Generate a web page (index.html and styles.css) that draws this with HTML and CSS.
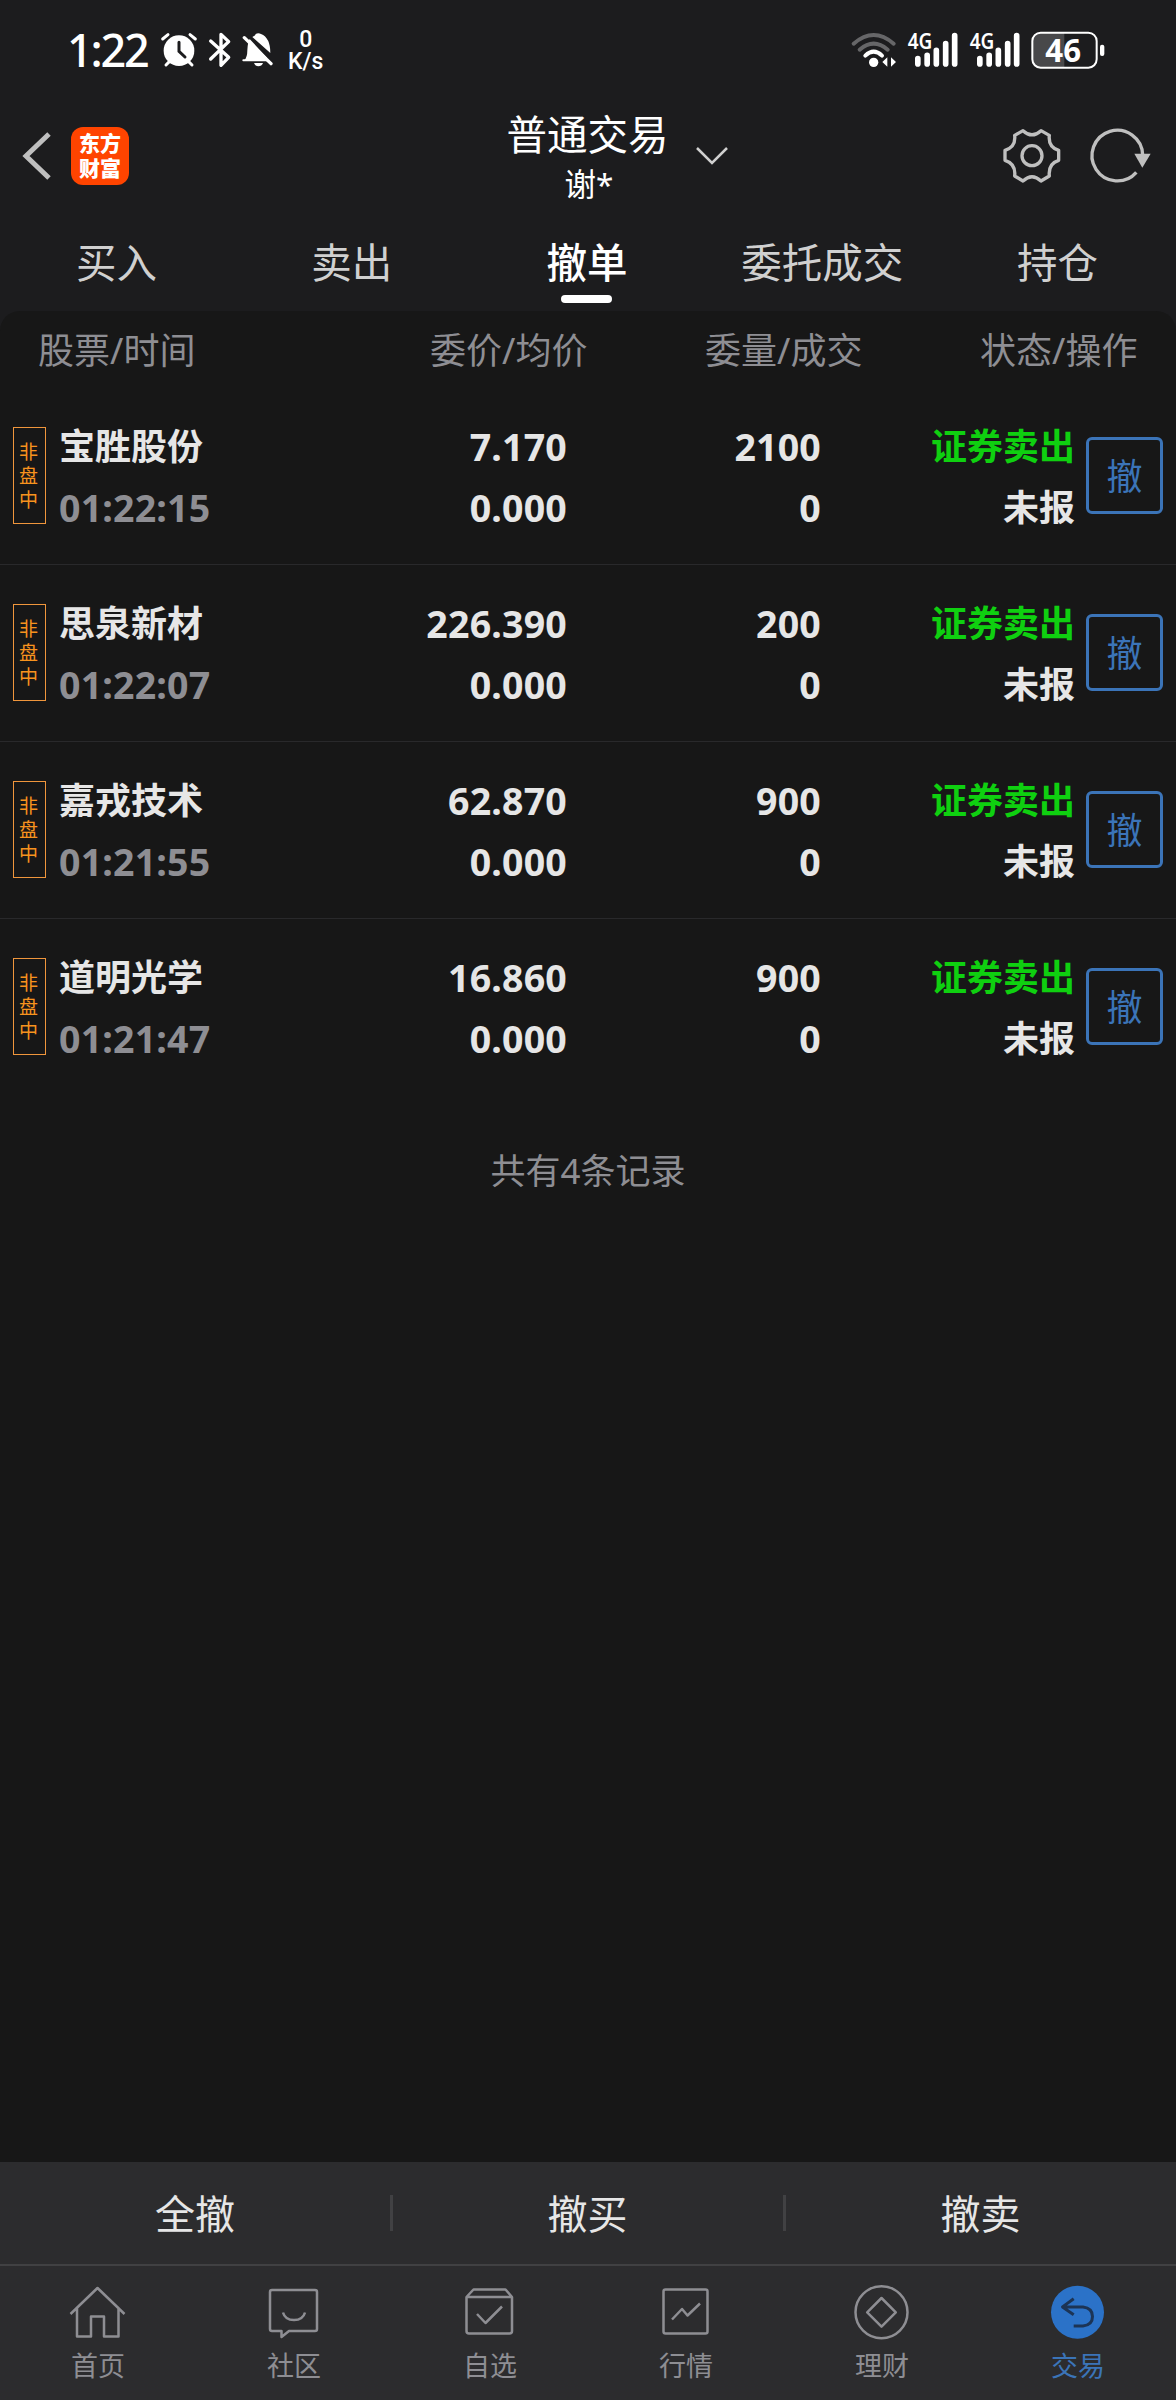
FILE: index.html
```html
<!DOCTYPE html>
<html lang="zh">
<head>
    <meta charset="UTF-8">
    <meta name="viewport" content="width=device-width, initial-scale=1.0">
    <title>普通交易 - 撤单</title>
    <link rel="stylesheet" href="styles.css">
</head>
<body>
    <div class="status-bar">
        <div class="status-left">
            <span class="clock">1:22</span>
            <svg class="icon-alarm" width="38" height="36" viewBox="480 95 114 108" fill="none" stroke="#fff" stroke-width="9" stroke-linecap="round">
                <circle cx="537" cy="151" r="46" fill="#fff" stroke="none"/>
                <path d="M488 116L504 103M570 103L586 116M498 194L508 184M576 194L566 184"/>
                <path d="M537 126V153L555 170" stroke="#1c1c1e"/>
            </svg>
            <svg class="icon-bt" width="24" height="36" viewBox="624 95 72 108" fill="none" stroke="#fff" stroke-width="10" stroke-linecap="round" stroke-linejoin="round">
                <path d="M632 122L686 171L663 195V102L686 124L632 176"/>
            </svg>
            <svg class="icon-mute" width="32" height="36" viewBox="727 95 96 108">
                <path d="M734 180Q743 171 743 150Q744 125 750 116L802 172V180Z" fill="#fff"/>
                <path d="M758 110Q768 105 768 101Q776 96 784 101Q812 112 812 158Z" fill="#fff"/>
                <path d="M731 180H803" stroke="#fff" stroke-width="6" stroke-linecap="round"/>
                <path d="M763 188H790Q786 198 776 198Q767 198 763 188Z" fill="#fff"/>
                <path d="M734 112L814 190" stroke="#fff" stroke-width="10" stroke-linecap="round"/>
            </svg>
            <div class="speed"><span>0</span><span>K/s</span></div>
        </div>
        <div class="status-right">
            <svg class="icon-wifi" width="46" height="36" viewBox="154 95 138 108" fill="none" stroke-width="12" stroke-linecap="round">
                <path d="M162 130Q222 78 282 130" stroke="#666668"/>
                <path d="M180 148Q222 112 264 148" stroke="#666668"/>
                <path d="M197 166Q222 142 247 166" stroke="#fff"/>
                <circle cx="222" cy="186" r="14" fill="#fff"/>
                <path d="M248 185L263 171V199ZM289 185L274 171V199Z" fill="#fff"/>
            </svg>
            <svg class="icon-signal" width="52" height="36" viewBox="322 95 156 108">
                <text x="324" y="147" font-size="66" textLength="74" lengthAdjust="spacingAndGlyphs" class="svg-text">4G</text>
                <path d="M354.500 175V191M382.500 165V191M410 150V191M438 130V191M465 106V191" stroke="#fff" stroke-width="17" stroke-linecap="round"/>
            </svg>
            <svg class="icon-signal" width="52" height="36" viewBox="322 95 156 108">
                <text x="324" y="147" font-size="66" textLength="74" lengthAdjust="spacingAndGlyphs" class="svg-text">4G</text>
                <path d="M354.500 175V191M382.500 165V191M410 150V191M438 130V191M465 106V191" stroke="#fff" stroke-width="17" stroke-linecap="round"/>
            </svg>
            <svg class="icon-battery" width="74" height="38" viewBox="695 91 222 114">
                <path d="M795 97H722Q699 97 699 120V178Q699 201 722 201H795Z" fill="#48484a"/>
                <rect x="699" y="96" width="193" height="105" rx="25" fill="none" stroke="#fff" stroke-width="6"/>
                <rect x="902" y="132" width="13" height="34" rx="6" fill="#fff"/>
                <text x="738" y="183" font-size="96" textLength="107" lengthAdjust="spacingAndGlyphs" class="svg-text battery-text">46</text>
            </svg>
        </div>
    </div>

    <div class="header">
        <div class="header-left">
            <svg width="28" height="48" viewBox="0 0 28 48" fill="none" stroke="#bfbfbf" stroke-width="5">
                <path d="M26 2L3 24L26 46"/>
            </svg>
            <div class="logo"><span>东方</span><span>财富</span></div>
        </div>
        <div class="header-title">
            <div class="title-text">
                <h1>普通交易</h1>
                <p>谢*</p>
            </div>
            <svg class="chevron" width="32" height="20" viewBox="0 0 32 20" fill="none" stroke="#d0d0d0" stroke-width="2.500">
                <path d="M1 2L16 17L31 2"/>
            </svg>
        </div>
        <div class="header-right">
            <svg width="58" height="56" viewBox="608 383 174 168" fill="none" stroke="#bfbfbf" stroke-width="10" stroke-linejoin="round">
                <path d="M668 391Q695 416 722 391L747 405Q743 440 775 450V480Q743 490 747 527L722 542Q695 517 668 542L643 527Q647 490 614 480V450Q647 440 643 405Z"/>
                <circle cx="695" cy="466" r="30"/>
            </svg>
            <svg width="61" height="56" viewBox="868 385 183 168" fill="none" stroke="#bfbfbf" stroke-width="10">
                <path d="M1026 466A76 76 0 1 0 1007 518"/>
                <path d="M1001 462H1050L1025 504Z" fill="#bfbfbf" stroke="none"/>
            </svg>
        </div>
    </div>

    <div class="tabs">
        <div class="tab">买入</div>
        <div class="tab">卖出</div>
        <div class="tab active">撤单</div>
        <div class="tab">委托成交</div>
        <div class="tab">持仓</div>
    </div>

    <div class="order-list">
        <div class="list-head">
            <span>股票/时间</span>
            <span>委价/均价</span>
            <span>委量/成交</span>
            <span>状态/操作</span>
        </div>

        <div class="order">
            <div class="tag">非盘中</div>
            <div class="col stock"><span>宝胜股份</span><span class="time">01:22:15</span></div>
            <div class="col price"><span>7.170</span><span>0.000</span></div>
            <div class="col amount"><span>2100</span><span>0</span></div>
            <div class="col state"><span class="sell">证券卖出</span><span>未报</span></div>
            <button type="button" class="cancel-button">撤</button>
        </div>
        <div class="order">
            <div class="tag">非盘中</div>
            <div class="col stock"><span>思泉新材</span><span class="time">01:22:07</span></div>
            <div class="col price"><span>226.390</span><span>0.000</span></div>
            <div class="col amount"><span>200</span><span>0</span></div>
            <div class="col state"><span class="sell">证券卖出</span><span>未报</span></div>
            <button type="button" class="cancel-button">撤</button>
        </div>
        <div class="order">
            <div class="tag">非盘中</div>
            <div class="col stock"><span>嘉戎技术</span><span class="time">01:21:55</span></div>
            <div class="col price"><span>62.870</span><span>0.000</span></div>
            <div class="col amount"><span>900</span><span>0</span></div>
            <div class="col state"><span class="sell">证券卖出</span><span>未报</span></div>
            <button type="button" class="cancel-button">撤</button>
        </div>
        <div class="order">
            <div class="tag">非盘中</div>
            <div class="col stock"><span>道明光学</span><span class="time">01:21:47</span></div>
            <div class="col price"><span>16.860</span><span>0.000</span></div>
            <div class="col amount"><span>900</span><span>0</span></div>
            <div class="col state"><span class="sell">证券卖出</span><span>未报</span></div>
            <button type="button" class="cancel-button">撤</button>
        </div>

        <p class="total">共有4条记录</p>
    </div>

    <div class="actions">
        <div class="action">全撤</div>
        <div class="action">撤买</div>
        <div class="action">撤卖</div>
    </div>

    <div class="bottom-nav">
        <div class="nav-item">
            <svg width="60" height="64" viewBox="0 0 60 64">
                <path d="M2.500 34L29.500 8L56.500 34M9 28V56.500H23V36.500H36V56.500H50.500V28"/>
            </svg>
            <span>首页</span>
        </div>
        <div class="nav-item">
            <svg width="60" height="64" viewBox="0 0 60 64">
                <path d="M8 10H51Q53 10 53 12V49Q53 51 51 51H25L17.500 57V51H8Q6 51 6 49V12Q6 10 8 10ZM19 32.500Q21 40 30 40Q39 40 41 32.500"/>
            </svg>
            <span>社区</span>
        </div>
        <div class="nav-item">
            <svg width="60" height="64" viewBox="0 0 60 64">
                <path d="M6.500 17L13.500 9.500H45.500L52 17V51Q52 53.500 49.500 53.500H9Q6.500 53.500 6.500 51ZM6.500 17H52M17 34L25.500 43L42 26.500"/>
            </svg>
            <span>自选</span>
        </div>
        <div class="nav-item">
            <svg width="60" height="64" viewBox="0 0 60 64">
                <rect x="7.500" y="9.500" width="44" height="44" rx="2"/>
                <path d="M16 39.500L26 29L31.500 35.500L44 23.500"/>
            </svg>
            <span>行情</span>
        </div>
        <div class="nav-item">
            <svg width="60" height="64" viewBox="0 0 60 64">
                <circle cx="29.500" cy="32.300" r="26"/>
                <path d="M29.500 18L43.800 32.300L29.500 46.600L15.200 32.300Z"/>
            </svg>
            <span>理财</span>
        </div>
        <div class="nav-item current">
            <svg width="60" height="64" viewBox="0 0 60 64">
                <circle cx="29.500" cy="32.300" r="26.500" class="nav-disc"/>
                <path d="M25.700 18.700L14.500 26.900L25.700 34.700M14.500 26.900H35Q44.500 28 44.500 36.500Q44.500 45 35 46H25.700" class="nav-arrow"/>
            </svg>
            <span>交易</span>
        </div>
    </div>
</body>
</html>
```
FILE: styles.css
```css
* {
    box-sizing: border-box;
}
body {
    font-family: "Noto Sans", "Noto Sans CJK SC", sans-serif;
    background-color: #1c1c1e;
    color: #e6e6e6;
    display: flex;
    flex-direction: column;
    height: 2400px;
    margin: 0;
}
svg {
    display: block;
    flex-shrink: 0;
    overflow: visible;
}
.svg-text {
    fill: #fff;
    font-weight: 600;
}
.battery-text {
    font-weight: 700;
}

/* 状态栏 */
.status-bar {
    display: flex;
    justify-content: space-between;
    height: 100px;
    padding: 0 71px 0 67px;
    color: #fff;
}
.status-left,
.status-right {
    display: flex;
    align-items: center;
}
.clock {
    width: 93px;
    font-family: "Noto Sans", sans-serif;
    font-size: 45px;
    font-weight: 500;
    line-height: 100px;
    letter-spacing: -2.2px;
}
.icon-bt {
    margin-left: 10px;
}
.icon-mute {
    margin-left: 10px;
}
.speed {
    display: flex;
    flex-direction: column;
    align-items: center;
    margin-left: 14px;
    padding-top: 1px;
    font-family: Roboto, sans-serif;
    font-size: 23px;
    font-weight: 500;
    line-height: 22px;
}
.icon-signal,
.icon-battery {
    margin-left: 10px;
}

/* 标题栏 */
.header {
    display: grid;
    grid-template-columns: 1fr auto 1fr;
    align-items: center;
    height: 112px;
    padding: 0 25px 0 23px;
}
.header-left {
    display: flex;
    align-items: center;
    gap: 20px;
}
.logo {
    display: flex;
    flex-direction: column;
    align-items: center;
    justify-content: center;
    width: 58px;
    height: 58px;
    border-radius: 12px;
    background-color: #ff4400;
    color: #fff;
    font-size: 21px;
    font-weight: 900;
    line-height: 25px;
}
.header-title {
    display: flex;
    align-items: center;
    gap: 27px;
    padding-left: 60px;
    color: #fff;
}
.title-text {
    padding-top: 3px;
    text-align: center;
}
.title-text h1 {
    margin: 0;
    font-size: 40.5px;
    font-weight: 400;
    line-height: 53px;
}
.title-text p {
    margin: 0;
    padding-left: 3px;
    font-size: 31.5px;
    line-height: 46px;
}
.header-right {
    display: flex;
    justify-content: flex-end;
    gap: 29px;
}

.tabs {
    display: grid;
    grid-template-columns: repeat(5, 1fr);
    height: 99px;
    font-size: 40.5px;
    line-height: 58px;
    text-align: center;
    color: #d0d0d0;
}
.tab {
    padding: 22px 2px 0 0;
}
.tab.active {
    color: #fff;
    font-weight: 500;
}
.tab.active::after {
    content: "";
    display: block;
    width: 51px;
    height: 8px;
    margin: 3px auto 0;
    border-radius: 4px;
    background-color: #fff;
}

/* 委托列表 */
.order-list {
    flex: 1;
    border-radius: 20px 20px 0 0;
    background-color: #171717;
}
.list-head {
    display: flex;
    height: 76px;
    padding: 0 39px 0 38px;
    font-size: 36px;
    line-height: 80px;
    color: #8e8e93;
}
.list-head span {
    width: 157px;
    white-space: nowrap;
}
.list-head span:nth-child(2) {
    margin-left: 235px;
}
.list-head span:nth-child(3) {
    margin-left: 118px;
}
.list-head span:nth-child(4) {
    margin-left: 118px;
}
.order {
    display: grid;
    grid-template-columns: 33px 220px 301px 254px 254px 88px;
    height: 178px;
    margin-bottom: -1px;
    padding-left: 13px;
    border-bottom: 1px solid #29292b;
}
.order:nth-last-child(2) {
    border-bottom: 0;
}
.tag {
    display: flex;
    align-items: center;
    justify-content: center;
    height: 97px;
    margin-top: 40px;
    border: 1px solid #f0963c;
    padding: 0 7px 0 5px;
    font-size: 19px;
    line-height: 24px;
    color: #f7931e;
}
.col {
    display: flex;
    flex-direction: column;
    padding-top: 29px;
    text-align: right;
    font-size: 37.5px;
    font-weight: 700;
    line-height: 61px;
    letter-spacing: 0.2px;
}
.stock {
    padding-left: 13px;
    text-align: left;
}
.stock span:first-child,
.state {
    font-size: 36px;
    letter-spacing: 0;
}
.stock .time {
    color: #8e8e93;
}
.state .sell {
    color: #0fd010;
}
.cancel-button {
    width: 77px;
    height: 77px;
    margin: 50px 0 0 11px;
    padding: 2px 0 0;
    border: 3px solid #3b74b8;
    border-radius: 6px;
    background: none;
    font-family: inherit;
    font-size: 36px;
    line-height: 1;
    color: #3b74b8;
}
.total {
    margin: 49px 0 0;
    text-align: center;
    font-size: 35px;
    line-height: 54px;
    color: #8e8e93;
}

/* 底部操作 */
.actions {
    display: grid;
    grid-template-columns: 390px 393px 393px;
    align-items: center;
    height: 104px;
    padding-bottom: 1px;
    border-bottom: 2px solid #414143;
    background-color: #2c2c2e;
}
.action {
    height: 36px;
    text-align: center;
    font-size: 40px;
    line-height: 37px;
}
.action + .action {
    border-left: 3px solid #414143;
    padding-right: 1px;
}
.bottom-nav {
    display: grid;
    grid-template-columns: repeat(6, 1fr);
    height: 134px;
    padding-top: 14px;
    background-color: #2c2c2e;
}
.nav-item {
    display: flex;
    flex-direction: column;
    align-items: center;
    font-size: 27px;
    line-height: 44px;
    color: #8e8e93;
}
.nav-item svg {
    fill: none;
    stroke: #8e8e93;
    stroke-width: 2.5;
    stroke-linejoin: round;
}
.nav-item.current {
    color: #3b74b8;
}
.nav-item .nav-disc {
    fill: #2b72c8;
    stroke: none;
}
.nav-item .nav-arrow {
    stroke: #1c3455;
    stroke-width: 3;
}
```
